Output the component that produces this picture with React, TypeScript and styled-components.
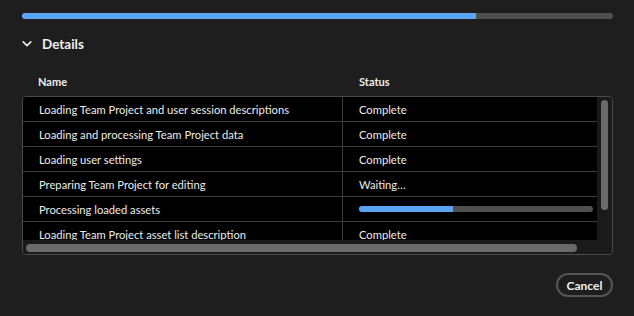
import React from "react";
import styled, { createGlobalStyle } from "styled-components";

const GlobalStyle = createGlobalStyle`
  html, body {
    margin: 0;
    padding: 0;
    background: #1e1e1e;
    font-family: Lato, "Open Sans", sans-serif;
    color: #ececec;
  }
`;

interface Task {
  name: string;
  status: string;
  progress?: number;
}

const tasks: Task[] = [
  { name: "Loading Team Project and user session descriptions", status: "Complete" },
  { name: "Loading and processing Team Project data", status: "Complete" },
  { name: "Loading user settings", status: "Complete" },
  { name: "Preparing Team Project for editing", status: "Waiting…" },
  { name: "Processing loaded assets", status: "", progress: 0.4 },
  { name: "Loading Team Project asset list description", status: "Complete" },
];

const App = () => {
  return (
    <>
      <GlobalStyle />
      <Dialog>
        <ProgressTrack $height={6}>
          <ProgressFill style={{ width: "76.8%" }} />
        </ProgressTrack>

        <SectionHeader>
          <svg width="10" height="8" viewBox="0 0 10 8">
            <path
              d="M1.2 1.8 L5 5.6 L8.8 1.8"
              fill="none"
              stroke="#e8e8e8"
              strokeWidth="1.7"
              strokeLinecap="round"
              strokeLinejoin="round"
            />
          </svg>
          <SectionTitle>Details</SectionTitle>
        </SectionHeader>

        <HeaderRow>
          <HeaderCell>Name</HeaderCell>
          <HeaderCell>Status</HeaderCell>
        </HeaderRow>

        <TableBox>
          <Viewport>
            {tasks.map((t) => (
              <Row key={t.name}>
                <NameCell>{t.name}</NameCell>
                <StatusCell>
                  {t.progress !== undefined ? (
                    <ProgressTrack $height={6}>
                      <ProgressFill style={{ width: `${t.progress * 100}%` }} />
                    </ProgressTrack>
                  ) : (
                    t.status
                  )}
                </StatusCell>
              </Row>
            ))}
          </Viewport>
          <VScroll>
            <VThumb />
          </VScroll>
          <HScroll>
            <HThumb />
          </HScroll>
          <Corner />
        </TableBox>

        <Footer>
          <CancelButton>Cancel</CancelButton>
        </Footer>
      </Dialog>
    </>
  );
};

export default App;

const Dialog = styled.div`
  width: 634px;
  height: 316px;
  box-sizing: border-box;
  padding: 13px 21px 0 22px;
  display: flex;
  flex-direction: column;
`;

const ProgressTrack = styled.div<{ $height: number }>`
  width: 100%;
  height: ${(p) => p.$height}px;
  background: #4f4f4f;
  border-radius: ${(p) => p.$height / 2}px;
  overflow: hidden;
  display: flex;
`;

const ProgressFill = styled.div`
  height: 100%;
  background: #5ba3f5;
`;

const SectionHeader = styled.div`
  display: flex;
  align-items: center;
  gap: 10px;
  margin-top: 17px;
  height: 16px;
`;

const SectionTitle = styled.span`
  font-size: 13.5px;
  font-weight: 700;
  color: #f0f0f0;
`;

const HeaderRow = styled.div`
  display: grid;
  grid-template-columns: 321px 1fr;
  margin-top: 22px;
  height: 14px;
  align-items: center;
`;

const HeaderCell = styled.div`
  font-size: 11px;
  font-weight: 700;
  color: #eeeeee;
  padding-left: 16px;
`;

const TableBox = styled.div`
  margin-top: 8px;
  height: 159px;
  box-sizing: border-box;
  border: 1px solid #4a4a4a;
  border-radius: 4px;
  overflow: hidden;
  display: grid;
  grid-template-columns: 1fr 15px;
  grid-template-rows: 1fr 14px;
  background: #1a1a1a;
`;

const Viewport = styled.div`
  overflow: hidden;
  background: #000;
`;

const Row = styled.div`
  display: grid;
  grid-template-columns: 320px 1fr;
  height: 25px;
  box-sizing: border-box;
  border-bottom: 1px solid #3c3c3c;
`;

const NameCell = styled.div`
  font-size: 11.2px;
  display: flex;
  align-items: center;
  padding-left: 16px;
  border-right: 1px solid #3c3c3c;
  white-space: nowrap;
`;

const StatusCell = styled.div`
  font-size: 11.2px;
  display: flex;
  align-items: center;
  padding: 0 4px 0 16px;
`;

const VScroll = styled.div`
  background: #1a1a1a;
  padding: 3px 0 0 4px;
`;

const VThumb = styled.div`
  width: 7px;
  height: 110px;
  border-radius: 4px;
  background: #6a6a6a;
`;

const HScroll = styled.div`
  background: #1a1a1a;
  padding: 4px 0 0 3px;
`;

const HThumb = styled.div`
  width: 551px;
  height: 8px;
  border-radius: 4px;
  background: #6a6a6a;
`;

const Corner = styled.div`
  background: #1a1a1a;
`;

const Footer = styled.div`
  display: flex;
  justify-content: flex-end;
  margin-top: 18px;
`;

const CancelButton = styled.button`
  height: 24px;
  width: 57px;
  box-sizing: border-box;
  border: 2px solid #555555;
  border-radius: 12px;
  background: transparent;
  color: #f0f0f0;
  font-family: Lato, "Open Sans", sans-serif;
  font-size: 12px;
  font-weight: 700;
  padding: 0;
`;
